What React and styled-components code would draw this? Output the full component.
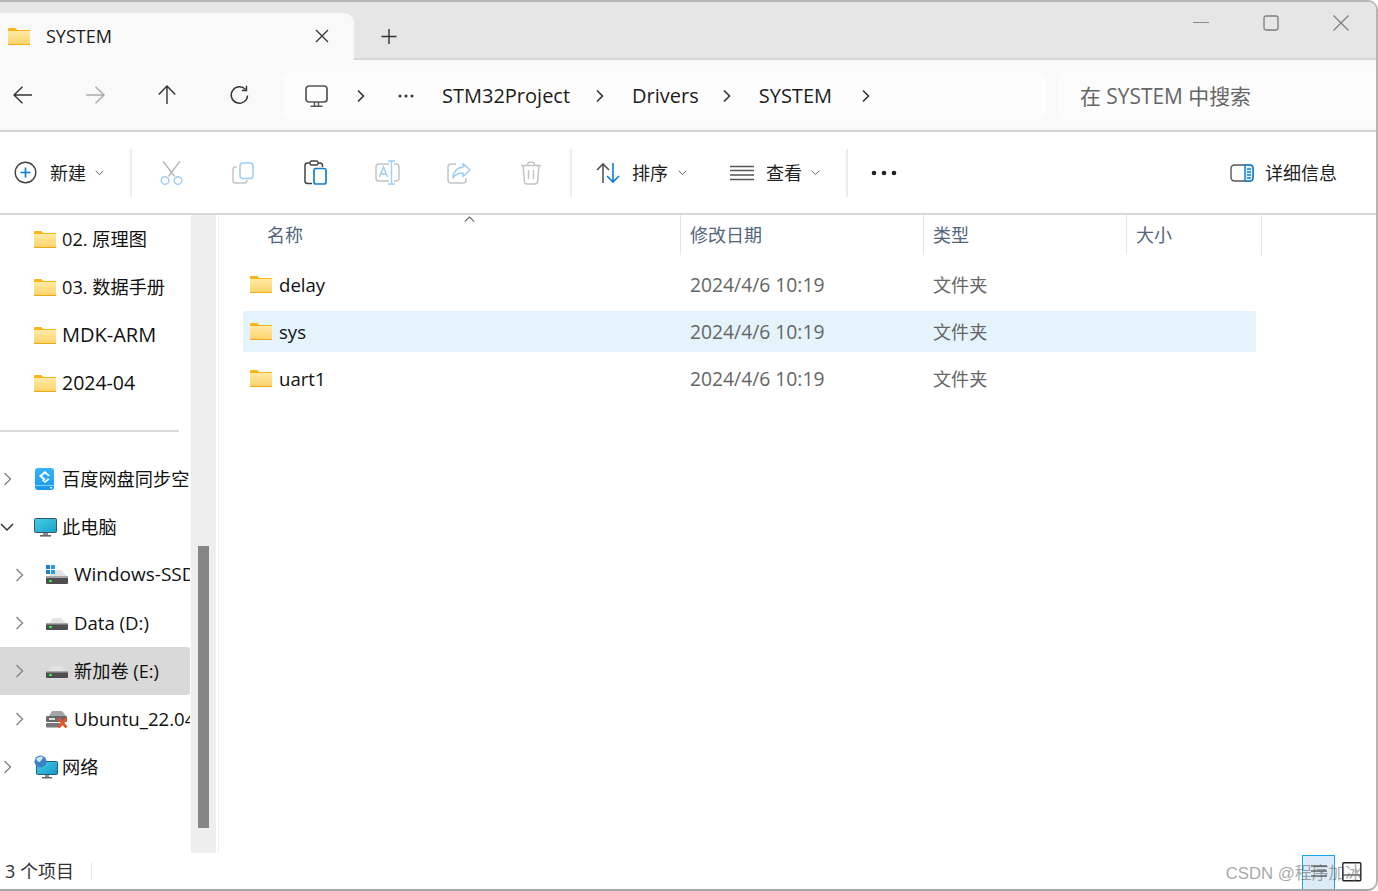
import React from "react";
import styled, { createGlobalStyle } from "styled-components";

const Global = createGlobalStyle`
  html, body { margin: 0; padding: 0; background: #fff; }
  body { font-family: "Open Sans", "Noto Sans CJK SC", sans-serif; overflow: hidden; }
  * { box-sizing: border-box; }
`;
const FONT = `"Open Sans", "Noto Sans CJK SC", sans-serif`;

const Win = styled.div`
  position: relative; width: 1378px; height: 891px; background: #fff; overflow: hidden;
  display: flex; flex-direction: column;
  border-top: 2px solid #b4b4b4; border-right: 2px solid #b4b4b4; border-bottom: 2px solid #a8a8a8;
  border-radius: 0 10px 10px 0; font-family: ${FONT};
`;
const TitleBar = styled.div`
  height: 58px; flex: none; background: #e6e6e6; border-bottom: 2px solid #d6d6d6;
  display: flex; align-items: flex-end;
`;
const Tab = styled.div`
  width: 354px; height: 47px; margin-bottom: -2px; background: #f9f9f9; border-radius: 0 10px 0 0;
  display: flex; align-items: center; padding: 0 0 0 8px; flex: none;
`;
const TabTitle = styled.span`
  font-size: 18px; font-weight: 500; color: #1b1b1b; margin-left: 16px; flex: 1; padding-bottom: 2px;
`;
const TabClose = styled.div`
  width: 16px; height: 16px; margin-right: 24px; margin-bottom: 2px; display: flex;
`;
const NewTab = styled.div`
  width: 20px; height: 20px; margin: 0 0 12px 25px; display: flex; flex: none;
`;
const WinControls = styled.div`
  margin-left: auto; align-self: flex-start; display: flex; padding: 13px 27px 0 0; gap: 54px; align-items: center;
`;
const NavRow = styled.div`
  height: 72px; flex: none; background: #f9f9f9; border-bottom: 2px solid #d4d4d4; display: flex;
`;
const NavBtn = styled.div`
  width: 72px; height: 70px; flex: none; display: flex; align-items: center; justify-content: center;
  &:first-child { margin-left: -13px; }
`;
const NavBtns = styled.div`
  display: flex; width: 284px; flex: none;
`;
const Address = styled.div`
  width: 762px; height: 48px; margin-top: 12px; background: #fdfdfd; border-radius: 7px; flex: none;
  display: flex; align-items: center; font-size: 20px; color: #1c1c1c; padding-left: 21px;
`;
const Crumb = styled.span`
  flex: none; white-space: nowrap; margin-left: ${p => p.$ml || 0}px; line-height: 48px;
`;
const CrumbIcon = styled.span`
  flex: none; display: flex; margin-left: ${p => p.$ml || 0}px;
`;
const Search = styled.div`
  width: 320px; height: 49px; margin: 11px 0 0 12px; background: #fcfcfc; border-radius: 7px 0 0 7px; flex: none;
  display: flex; align-items: center; padding: 0 0 2px 22px; font-size: 20.9px; color: #666;
`;
const Toolbar = styled.div`
  height: 83px; flex: none; border-bottom: 2px solid #d7d7d7; display: flex; align-items: center; background: #fff;
`;
const Sep = styled.div`
  width: 2px; height: 48px; background: #ececec; flex: none; margin-left: ${p => p.$ml || 0}px; margin-right: ${p => p.$mr || 0}px;
`;
const ToolIcon = styled.div`
  width: 72px; height: 48px; flex: none; display: flex; align-items: center; justify-content: center;
`;
const ToolLabel = styled.span`
  font-size: 18px; color: #1f1f1f; flex: none; margin-left: ${p => p.$ml || 0}px; white-space: nowrap; padding-bottom: 2px;
`;
const Glyph = styled.span`
  display: flex; flex: none; margin-left: ${p => p.$ml || 0}px;
`;
const Main = styled.div`
  flex: 1; display: flex; min-height: 0;
`;
const Side = styled.div`
  width: 190px; flex: none; overflow: hidden; display: flex; flex-direction: column;
`;
const SideRow = styled.div`
  height: 48px; flex: none; display: flex; align-items: center; color: #111;
  white-space: nowrap; overflow: hidden; padding-left: ${p => p.$pl}px;
  background: ${p => p.$active ? "#d9d9d9" : "transparent"};
  border-radius: 0 3px 3px 0;
`;
const SideText = styled.span`
  font-size: ${p => p.$fs || 18.2}px; padding-bottom: 2px; flex: none;
`;
const Expander = styled.span`
  width: 14px; margin: 0 ${p => p.$pl - 14 - p.$x}px 0 ${p => p.$x - p.$pl}px; flex: none; display: flex; align-items: center; justify-content: center;
  & > svg { flex: none; }
`;
const RowIcon = styled.span`
  width: 22px; flex: none; display: flex; margin-right: ${p => p.$mr || 6}px;
  & > svg { flex: none; }
`;
const SideRule = styled.div`
  width: 179px; height: 2px; background: #d9d9d9; flex: none; margin: 23px 0 23px;
`;
const Track = styled.div`
  width: 25px; flex: none; margin-left: 1px; background: #eeeeee; padding: 331px 0 0 7px;
`;
const Thumb = styled.div`
  width: 11px; height: 282px; background: #868686;
`;
const Divider = styled.div`
  width: 1px; flex: none; margin-left: 2px; background: #f0f0f0;
`;
const Files = styled.div`
  flex: 1; display: flex; flex-direction: column; position: relative; min-width: 0;
`;
const Header = styled.div`
  height: 40px; flex: none; display: flex; margin-bottom: 9px;
`;
const HeaderCell = styled.div`
  width: ${p => p.$w}px; flex: none; padding-left: ${p => p.$pl || 9}px; border-right: 1px solid #e5e5e5;
  font-size: 18px; color: #52657c; line-height: 41px;
`;
const SortArrow = styled.span`
  position: absolute; left: 245px; top: 1px; display: flex;
`;
const FileRow = styled.div`
  width: 1013px; height: 41px; margin-left: 24px; margin-bottom: 6px; display: flex; align-items: center; flex: none;
  border-radius: 2px; background: ${p => p.$sel ? "#e5f3fd" : "transparent"};
`;
const NameCell = styled.div`
  width: 447px; flex: none; display: flex; align-items: center; padding-left: 7px; font-size: 18.6px; color: #111;
`;
const DateCell = styled.div`
  width: 243px; flex: none; font-size: 19.3px; color: #666;
`;
const TypeCell = styled.div`
  font-size: 18.1px; color: #666; padding-bottom: 2px;
`;
const Status = styled.div`
  height: 36px; flex: none; display: flex; align-items: center; font-size: 18px; color: #333; padding-left: 5px; position: relative;
`;
const StatusLabel = styled.span`
  padding-bottom: 2px;
`;
const StatusSep = styled.div`
  width: 1px; height: 18px; background: #e8e8e8; margin-left: 17px;
`;
const ViewBtns = styled.div`
  margin-left: auto; display: flex; align-items: center; margin-right: 14px; margin-top: 2px;
`;
const ViewOn = styled.div`
  width: 33px; height: 35px; border: 1px solid #1aa7e8; background: #dcebf7; display: flex; align-items: center; justify-content: center;
`;
const ViewOff = styled.div`
  width: 20px; height: 20px; margin-left: 7px; display: flex;
`;
const Watermark = styled.div`
  position: absolute; right: 14px; top: 7px; font-family: "Liberation Sans", "Noto Sans CJK SC", sans-serif;
  font-size: 16.8px; color: rgba(90,90,90,.55); white-space: nowrap;
`;

const S = ({ w, h, vb, children, ...r }) => (
  <svg width={w} height={h} viewBox={vb || `0 0 ${w} ${h}`} fill="none" {...r}>{children}</svg>
);

let gid = 0;
const Folder = () => {
  const id = "fg" + gid++;
  return (
    <S w={22} h={17}>
      <defs><linearGradient id={id} x1="0" y1="0" x2="0" y2="1"><stop offset="0" stopColor="#ffeaa6" /><stop offset="1" stopColor="#fdd268" /></linearGradient></defs>
      <path d="M0 1.5C0 .7.6 0 1.4 0H7l2.5 2H22v3H0z" fill="#fbb616" />
      <rect x="0" y="3" width="22" height="14" fill={`url(#${id})`} />
      <rect x="0" y="16" width="22" height="1" fill="#eea918" />
    </S>
  );
};
const Drive = () => (
  <S w={22} h={14}>
    <path d="M3 7 L7 2 H15 L20 7z" fill="#e2e2e2" />
    <rect x="0" y="7" width="22" height="7" rx="1" fill="#4e4e4e" />
    <rect x="0" y="7" width="22" height="1.5" fill="#a8a8a8" />
    <rect x="3" y="10" width="3" height="2" fill="#2ee84f" />
  </S>
);
const WinDrive = () => (
  <S w={22} h={20}>
    <rect x="0" y="0" width="4" height="4" fill="#1f7fc9" /><rect x="5" y="0" width="4" height="4" fill="#2a9be0" />
    <rect x="0" y="5" width="4" height="4" fill="#1f7fc9" /><rect x="5" y="5" width="4" height="4" fill="#2a9be0" />
    <path d="M9 6 L10 5 H15 L21 11 H3 L5 9 H9z" fill="#e2e2e2" />
    <rect x="0" y="11" width="22" height="8" rx="1" fill="#4e4e4e" />
    <rect x="0" y="11" width="22" height="2" fill="#a8a8a8" />
    <rect x="3" y="15" width="3" height="2" fill="#2ee84f" />
  </S>
);
const UbuntuDrive = () => (
  <S w={22} h={17}>
    <path d="M3 5 L6 0 H16 L20 5z" fill="#a5a5a5" />
    <rect x="0" y="5" width="21" height="6" rx="1" fill="#6a6a6a" />
    <rect x="3" y="7" width="6" height="2" fill="#ddd" />
    <rect x="0" y="12" width="14" height="4.5" rx="1" fill="#777" />
    <path d="M12.5 7.5 L20.5 16.5 M20.5 7.5 L12.5 16.5" stroke="#e0562a" strokeWidth="2.8" />
  </S>
);
const Baidu = () => (
  <S w={20} h={22}>
    <defs><linearGradient id="bd" x1="0" y1="0" x2="0" y2="1"><stop offset="0" stopColor="#38b4f7" /><stop offset="1" stopColor="#1897f2" /></linearGradient></defs>
    <rect x="1" y="0" width="19" height="22" rx="3" fill="url(#bd)" />
    <rect x="1" y="17" width="19" height="1" fill="#8fd4fb" />
    <path d="M11 3 L16.5 8 L14 8 L11 5.5 L8 8 L11.5 11 L10 12.5 L5 8z" fill="#fff" />
    <path d="M11 13 L14 10 L15.5 11.5 L11 15 L8 12.5 L9 11.5z" fill="#fff" />
    <rect x="16" y="19" width="2" height="1.5" fill="#dff3ff" />
  </S>
);
const Pc = () => (
  <S w={23} h={19}>
    <defs><linearGradient id="pc" x1="0" y1="0" x2="1" y2="1"><stop offset="0" stopColor="#45d1e6" /><stop offset="1" stopColor="#17a0c9" /></linearGradient></defs>
    <rect x="0.5" y="0.5" width="22" height="14" rx="1" fill="url(#pc)" stroke="#3d5560" />
    <rect x="9" y="15" width="5" height="2" fill="#8a8a8a" />
    <rect x="6" y="17" width="11" height="1.6" fill="#666" />
  </S>
);
const Net = () => (
  <S w={24} h={24}>
    <defs><linearGradient id="nt" x1="0" y1="0" x2="1" y2="1"><stop offset="0" stopColor="#4ad2ea" /><stop offset="1" stopColor="#1494c9" /></linearGradient></defs>
    <rect x="2.5" y="6.5" width="21" height="13" rx="1" fill="url(#nt)" stroke="#1f5f78" />
    <circle cx="6.5" cy="6.5" r="6" fill="#3a83c4" />
    <path d="M2 4c2-2 5-3 7-2 0 2-2 3-3 5-2 0-3-1-4-3z" fill="#cfe6f5" />
    <rect x="11" y="20" width="4" height="2" fill="#8a8a8a" />
    <rect x="8" y="22" width="10" height="1.5" fill="#666" />
  </S>
);

const Chev = () => (
  <S w={9} h={16}><path d="M1.5 2 L7.5 8 L1.5 14" stroke="#8a8a8a" strokeWidth="1.5" /></S>
);
const ChevDown = () => (
  <S w={14} h={9}><path d="M1 1 L7 7 L13 1" stroke="#333" strokeWidth="1.5" /></S>
);
const Crumbchev = ({ ml }) => (
  <CrumbIcon $ml={ml}><S w={8} h={14}><path d="M1 1.5 L6.5 7 L1 12.5" stroke="#333" strokeWidth="1.6" /></S></CrumbIcon>
);
const Caret = ({ ml }) => (
  <Glyph $ml={ml}><S w={9} h={6}><path d="M.7.8 L4.5 4.6 L8.3.8" stroke="#666" strokeWidth="1" /></S></Glyph>
);

const sideItems = [
  { t: "02. 原理图", pl: 34, icon: <Folder /> },
  { t: "03. 数据手册", pl: 34, icon: <Folder /> },
  { t: "MDK-ARM", pl: 34, fs: 20, icon: <Folder /> },
  { t: "2024-04", pl: 34, fs: 19.5, icon: <Folder /> },
];
const sideItems2 = [
  { t: "百度网盘同步空间", pl: 34, x: 0, icon: <Baidu /> },
  { t: "此电脑", pl: 34, x: 0, down: true, icon: <Pc /> },
  { t: "Windows-SSD (C:)", pl: 46, x: 12, fs: 19, icon: <WinDrive /> },
  { t: "Data (D:)", pl: 46, x: 12, fs: 18.6, icon: <Drive /> },
  { t: "新加卷 (E:)", pl: 46, x: 12, active: true, icon: <Drive /> },
  { t: "Ubuntu_22.04 (F:)", pl: 46, x: 12, fs: 18.6, icon: <UbuntuDrive /> },
  { t: "网络", pl: 34, x: 0, icon: <Net /> },
];
const files = ["delay", "sys", "uart1"];

export default function App() {
  return (
    <>
      <Global />
      <Win>
        <TitleBar>
          <Tab>
            <Folder />
            <TabTitle>SYSTEM</TabTitle>
            <TabClose><S w={16} h={16}><path d="M2 2 L14 14 M14 2 L2 14" stroke="#333" strokeWidth="1.3" /></S></TabClose>
          </Tab>
          <NewTab><S w={20} h={20}><path d="M10 3 V18 M2.5 10.5 H17.5" stroke="#333" strokeWidth="1.4" /></S></NewTab>
          <WinControls>
            <S w={16} h={16}><path d="M0 7.5 H16" stroke="#8c8c8c" strokeWidth="1.2" /></S>
            <S w={16} h={16}><rect x="1" y="1" width="14" height="14" rx="2" stroke="#7d7d7d" strokeWidth="1.3" /></S>
            <S w={16} h={16}><path d="M.5.5 L15.5 15.5 M15.5.5 L.5 15.5" stroke="#7d7d7d" strokeWidth="1.2" /></S>
          </WinControls>
        </TitleBar>
        <NavRow>
          <NavBtns>
            <NavBtn><S w={20} h={18}><path d="M1 9 H19 M9.5 .8 L1 9 L9.5 17.2" stroke="#333" strokeWidth="1.4" /></S></NavBtn>
            <NavBtn><S w={20} h={18}><path d="M1 9 H19 M10.5 .8 L19 9 L10.5 17.2" stroke="#aaa" strokeWidth="1.4" /></S></NavBtn>
            <NavBtn><S w={18} h={20}><path d="M9 1 V19 M.8 9.5 L9 1 L17.2 9.5" stroke="#333" strokeWidth="1.4" /></S></NavBtn>
            <NavBtn><S w={20} h={20}><path d="M16.5 4.5 A8.2 8.2 0 1 0 18.6 10.5" stroke="#333" strokeWidth="1.4" /><path d="M17.5 .8 V5.5 H12.8" stroke="#333" strokeWidth="1.4" /></S></NavBtn>
          </NavBtns>
          <Address>
            <CrumbIcon><S w={23} h={23}>
              <rect x="1" y="1" width="21" height="16" rx="3" stroke="#555" strokeWidth="1.7" />
              <path d="M9.5 17 V20.5 M13.5 17 V20.5 M5.5 21.3 H17.5" stroke="#555" strokeWidth="1.4" />
            </S></CrumbIcon>
            <Crumbchev ml={29} />
            <CrumbIcon $ml={32}><S w={18} h={6}><circle cx="3" cy="3" r="1.5" fill="#333" /><circle cx="9" cy="3" r="1.5" fill="#333" /><circle cx="15" cy="3" r="1.5" fill="#333" /></S></CrumbIcon>
            <Crumb $ml={27}>STM32Project</Crumb>
            <Crumbchev ml={26} />
            <Crumb $ml={28}>Drivers</Crumb>
            <Crumbchev ml={24} />
            <Crumb $ml={28}>SYSTEM</Crumb>
            <Crumbchev ml={30} />
          </Address>
          <Search>在 SYSTEM 中搜索</Search>
        </NavRow>
        <Toolbar>
          <Glyph $ml={14}><S w={23} h={23}>
            <circle cx="11.5" cy="11.5" r="10.3" stroke="#444" strokeWidth="1.4" />
            <path d="M11.5 6.5 V16.5 M6.5 11.5 H16.5" stroke="#0f7fd6" strokeWidth="1.7" />
          </S></Glyph>
          <ToolLabel $ml={13}>新建</ToolLabel>
          <Caret ml={9} />
          <Sep $ml={26} $mr={3} />
          <ToolIcon><S w={23} h={24}>
            <path d="M3 0 L14.5 15.5 M20 0 L8.5 15.5" stroke="#b4b4b4" strokeWidth="1.3" />
            <circle cx="5" cy="19.5" r="3.8" stroke="#9dcdf2" strokeWidth="1.4" />
            <circle cx="18" cy="19.5" r="3.8" stroke="#9dcdf2" strokeWidth="1.4" />
          </S></ToolIcon>
          <ToolIcon><S w={22} h={22}>
            <path d="M5 5 H4 C2 5 1 6 1 8 V18 C1 20 2 21 4 21 H12 C14 21 15 20 15 18" stroke="#c4c4c4" strokeWidth="1.5" />
            <rect x="8" y="1" width="13" height="15.5" rx="3" stroke="#9dcdf2" strokeWidth="1.5" />
          </S></ToolIcon>
          <ToolIcon><S w={23} h={25}>
            <path d="M14 3 H16 C17.5 3 18.5 4 18.5 5.5 V7 M8 23.5 H3.5 C2 23.5 1 22.5 1 21 V5.5 C1 4 2 3 3.5 3 H6" stroke="#444" strokeWidth="1.5" />
            <rect x="6" y="1" width="8" height="4" rx="1.5" stroke="#444" strokeWidth="1.4" />
            <rect x="10" y="8.5" width="12" height="15.5" rx="2" stroke="#0f7fd6" strokeWidth="1.7" />
          </S></ToolIcon>
          <ToolIcon><S w={25} h={25}>
            <path d="M14 4 H4 C2 4 1 5 1 7 V18 C1 20 2 21 4 21 H14 M19 4 H21 C23 4 24 5 24 7 V18 C24 20 23 21 21 21 H19" stroke="#c4c4c4" strokeWidth="1.5" />
            <path d="M13 1 H20 M16.5 1 V24 M13 24 H20" stroke="#9dcdf2" strokeWidth="1.4" />
            <path d="M4.5 17 L8.5 7 L12.5 17 M6 14 H11" stroke="#9dcdf2" strokeWidth="1.4" />
          </S></ToolIcon>
          <ToolIcon><S w={24} h={22}>
            <path d="M9 2 H4 C2 2 1 3 1 5 V18 C1 20 2 21 4 21 H16 C18 21 19 20 19 18 V16" stroke="#c4c4c4" strokeWidth="1.5" />
            <path d="M16 1.5 L23 8 L16 14.5 V11 C11 11 8 13 6 16 C6 10 10 5.5 16 5z" stroke="#9dcdf2" strokeWidth="1.5" strokeLinejoin="round" />
          </S></ToolIcon>
          <ToolIcon><S w={22} h={24}>
            <path d="M1 4.5 H21 M7.5 4 C7.5 2 9 1 11 1 C13 1 14.5 2 14.5 4 M3 5 L4.5 21 C4.6 22.5 5.5 23 7 23 H15 C16.5 23 17.4 22.5 17.5 21 L19 5 M8.5 9 V18 M13.5 9 V18" stroke="#c4c4c4" strokeWidth="1.5" />
          </S></ToolIcon>
          <Sep $ml={3} />
          <Glyph $ml={24}><S w={24} h={22}>
            <path d="M7 21 V2 M1 8 L7 2 L13 8" stroke="#555" strokeWidth="1.6" />
            <path d="M17 1 V20 M11 14 L17 20 L23 14" stroke="#0f7fd6" strokeWidth="1.6" />
          </S></Glyph>
          <ToolLabel $ml={12}>排序</ToolLabel>
          <Caret ml={10} />
          <Glyph $ml={43}><S w={24} h={16}>
            <path d="M0 1.5 H24 M0 5.5 H24 M0 10 H24 M0 14.5 H24" stroke="#555" strokeWidth="1.3" />
          </S></Glyph>
          <ToolLabel $ml={12}>查看</ToolLabel>
          <Caret ml={9} />
          <Sep $ml={26} />
          <Glyph $ml={23}><S w={26} h={6}><circle cx="3" cy="3" r="2.3" fill="#222" /><circle cx="13" cy="3" r="2.3" fill="#222" /><circle cx="23" cy="3" r="2.3" fill="#222" /></S></Glyph>
          <Glyph $ml={333}><S w={24} h={18}>
            <rect x="1" y="1" width="22" height="16" rx="3.5" stroke="#555" strokeWidth="1.4" />
            <path d="M15 1 H20 C22 1 23 2 23 4.5 V13.5 C23 16 22 17 20 17 H15z" fill="#e3f1fc" stroke="#0f7fd6" strokeWidth="1.5" />
            <path d="M17 5 H21 M17 8 H21 M17 11 H21 M17 14 H21" stroke="#0f7fd6" strokeWidth="1.3" />
          </S></Glyph>
          <ToolLabel $ml={11}>详细信息</ToolLabel>
        </Toolbar>
        <Main>
          <Side>
            {sideItems.map(i => (
              <SideRow key={i.t} $pl={i.pl}><RowIcon>{i.icon}</RowIcon><SideText $fs={i.fs}>{i.t}</SideText></SideRow>
            ))}
            <SideRule />
            {sideItems2.map(i => (
              <SideRow key={i.t} $pl={i.pl} $active={i.active}>
                <Expander $pl={i.pl} $x={i.x}>{i.down ? <ChevDown /> : <Chev />}</Expander>
                <RowIcon>{i.icon}</RowIcon><SideText $fs={i.fs}>{i.t}</SideText>
              </SideRow>
            ))}
          </Side>
          <Track><Thumb /></Track>
          <Divider />
          <Files>
            <SortArrow><S w={11} h={7}><path d="M.7 5.6 L5.5 1 L10.3 5.6" stroke="#666" strokeWidth="1.1" /></S></SortArrow>
            <Header>
              <HeaderCell $w={462} $pl={48}>名称</HeaderCell>
              <HeaderCell $w={243}>修改日期</HeaderCell>
              <HeaderCell $w={203}>类型</HeaderCell>
              <HeaderCell $w={135}>大小</HeaderCell>
            </Header>
            {files.map(f => (
              <FileRow key={f} $sel={f === "sys"}>
                <NameCell><RowIcon $mr={7}><Folder /></RowIcon>{f}</NameCell>
                <DateCell>2024/4/6 10:19</DateCell>
                <TypeCell>文件夹</TypeCell>
              </FileRow>
            ))}
          </Files>
        </Main>
        <Status>
          <StatusLabel>3 个项目</StatusLabel><StatusSep />
          <ViewBtns>
            <ViewOn><S w={18} h={16}><path d="M1 2 H17 M1 7 H17 M1 12 H17" stroke="#222" strokeWidth="1.2" /></S></ViewOn>
            <ViewOff><S w={20} h={20}><rect x=".8" y=".8" width="18" height="18" rx="1" stroke="#222" strokeWidth="1.4" /><path d="M.8 13 H19" stroke="#222" strokeWidth="1.2" /></S></ViewOff>
          </ViewBtns>
          <Watermark>CSDN @程序加冰</Watermark>
        </Status>
      </Win>
    </>
  );
}
